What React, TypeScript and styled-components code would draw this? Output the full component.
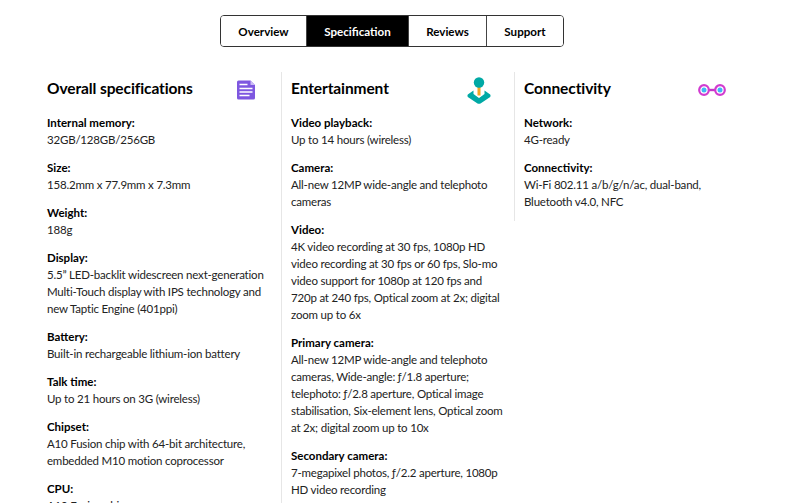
import React from "react";
import styled, { createGlobalStyle } from "styled-components";

const GlobalStyle = createGlobalStyle`
  html, body {
    margin: 0;
    padding: 0;
    height: 503px;
    overflow: hidden;
    background: #fff;
    font-family: Lato, "Open Sans", sans-serif;
    color: #000;
  }
`;

const Page = styled.div`
  width: 800px;
  height: 503px;
  overflow: hidden;
`;

const TabBar = styled.nav`
  display: flex;
  width: max-content;
  margin: 15px 0 0 220px;
  border: 1px solid #333;
  border-radius: 4px;
  overflow: hidden;
`;

const Tab = styled.div<{ $active?: boolean; $width: number }>`
  box-sizing: border-box;
  width: ${(p) => p.$width}px;
  height: 30px;
  display: flex;
  align-items: center;
  justify-content: center;
  font-size: 11.6px;
  font-weight: 700;
  background: ${(p) => (p.$active ? "#000" : "#fff")};
  color: ${(p) => (p.$active ? "#fff" : "#000")};
  & + & {
    border-left: 1px solid #444;
  }
`;

const Columns = styled.div`
  display: flex;
  align-items: flex-start;
  margin: 25px 0 0 47px;
`;

const Column = styled.section<{ $first?: boolean }>`
  width: ${(p) => (p.$first ? 234 : 233)}px;
  box-sizing: border-box;
  padding: 0 9px 0 ${(p) => (p.$first ? 0 : 9)}px;
  border-left: ${(p) => (p.$first ? "none" : "1px solid #e6e6e6")};
`;

const ColumnHead = styled.header<{ $inset: number }>`
  display: flex;
  justify-content: space-between;
  align-items: center;
  height: 32px;
  padding-right: ${(p) => p.$inset}px;
  margin-bottom: 10px;

  svg {
    margin-top: 4px;
  }
`;

const Title = styled.h2`
  margin: 0;
  font-size: 15.5px;
  letter-spacing: -0.1px;
  line-height: 32px;
  font-weight: 700;
`;

const Spec = styled.div`
  margin-bottom: 11px;
  font-size: 11.5px;
  line-height: 17px;
`;

const Label = styled.div`
  font-weight: 700;
`;

const Value = styled.div`
  color: #222;
  letter-spacing: -0.2px;
`;

const DocIcon = () => (
  <svg width="20" height="20" viewBox="0 0 20 20">
    <path d="M1 2a1.500 1.500 0 0 1 1.500-1.500H14.500L19 5V18a1.500 1.500 0 0 1-1.500 1.500h-15A1.500 1.500 0 0 1 1 18z" fill="#7e57e0" />
    <path d="M14.500 .500L19 5h-4.500z" fill="#cbbcf6" />
    <path d="M3.500 4.500h8M3.500 8.500h13M3.500 12h13M3.500 15.500h10" stroke="#fff" strokeWidth="1.500" />
  </svg>
);

const JoystickIcon = () => (
  <svg width="24" height="27" viewBox="0 0 24 27">
    <path d="M6.500 13.500L0.800 17.500Q0 18.500 0.800 20L10.500 26.500Q12 27 13.500 26.500L23.200 20Q24 18.500 23.200 17.500L17.500 13.500V17L12 21L6.500 17z" fill="#00a9a5" />
    <path d="M8.500 11h7v7l-3.500 2.500L8.500 18z" fill="#fff" />
    <rect x="10.500" y="10" width="3" height="8.500" fill="#f5a623" />
    <circle cx="12" cy="5.500" r="5.200" fill="#00a9a5" />
  </svg>
);

const LinkIcon = () => (
  <svg width="28" height="14" viewBox="0 0 28 14">
    <rect x="9" y="5.800" width="10" height="2.400" fill="#c636c9" />
    <circle cx="6" cy="7" r="4.800" fill="#fff" stroke="#d13bd0" strokeWidth="2.200" />
    <circle cx="22" cy="7" r="4.800" fill="#fff" stroke="#d13bd0" strokeWidth="2.200" />
    <circle cx="6" cy="7" r="2.500" fill="#3fb8f5" />
    <circle cx="22" cy="7" r="2.500" fill="#3fb8f5" />
  </svg>
);

type SpecItem = [string, string];

const overall: SpecItem[] = [
  ["Internal memory:", "32GB/128GB/256GB"],
  ["Size:", "158.2mm x 77.9mm x 7.3mm"],
  ["Weight:", "188g"],
  ["Display:", "5.5” LED-backlit widescreen next-generation Multi-Touch display with IPS technology and new Taptic Engine (401ppi)"],
  ["Battery:", "Built-in rechargeable lithium-ion battery"],
  ["Talk time:", "Up to 21 hours on 3G (wireless)"],
  ["Chipset:", "A10 Fusion chip with 64-bit architecture, embedded M10 motion coprocessor"],
  ["CPU:", "A10 Fusion chip"],
];

const entertainment: SpecItem[] = [
  ["Video playback:", "Up to 14 hours (wireless)"],
  ["Camera:", "All-new 12MP wide-angle and telephoto cameras"],
  ["Video:", "4K video recording at 30 fps, 1080p HD video recording at 30 fps or 60 fps, Slo-mo video support for 1080p at 120 fps and 720p at 240 fps, Optical zoom at 2x; digital zoom up to 6x"],
  ["Primary camera:", "All-new 12MP wide-angle and telephoto cameras, Wide-angle: ƒ/1.8 aperture; telephoto: ƒ/2.8 aperture, Optical image stabilisation, Six-element lens, Optical zoom at 2x; digital zoom up to 10x"],
  ["Secondary camera:", "7-megapixel photos, ƒ/2.2 aperture, 1080p HD video recording"],
];

const connectivity: SpecItem[] = [
  ["Network:", "4G-ready"],
  ["Connectivity:", "Wi-Fi 802.11 a/b/g/n/ac, dual-band, Bluetooth v4.0, NFC"],
];

const SpecList = ({ items }: { items: SpecItem[] }) => (
  <>
    {items.map(([label, value]) => (
      <Spec key={label}>
        <Label>{label}</Label>
        <Value>{value}</Value>
      </Spec>
    ))}
  </>
);

export default function App() {
  return (
    <Page>
      <GlobalStyle />
      <TabBar>
        <Tab $width={85}>Overview</Tab>
        <Tab $active $width={102}>Specification</Tab>
        <Tab $width={78}>Reviews</Tab>
        <Tab $width={77}>Support</Tab>
      </TabBar>
      <Columns>
        <Column $first>
          <ColumnHead $inset={16}>
            <Title>Overall specifications</Title>
            <DocIcon />
          </ColumnHead>
          <SpecList items={overall} />
        </Column>
        <Column>
          <ColumnHead $inset={14}>
            <Title>Entertainment</Title>
            <JoystickIcon />
          </ColumnHead>
          <SpecList items={entertainment} />
        </Column>
        <Column>
          <ColumnHead $inset={12}>
            <Title>Connectivity</Title>
            <LinkIcon />
          </ColumnHead>
          <SpecList items={connectivity} />
        </Column>
      </Columns>
    </Page>
  );
}
